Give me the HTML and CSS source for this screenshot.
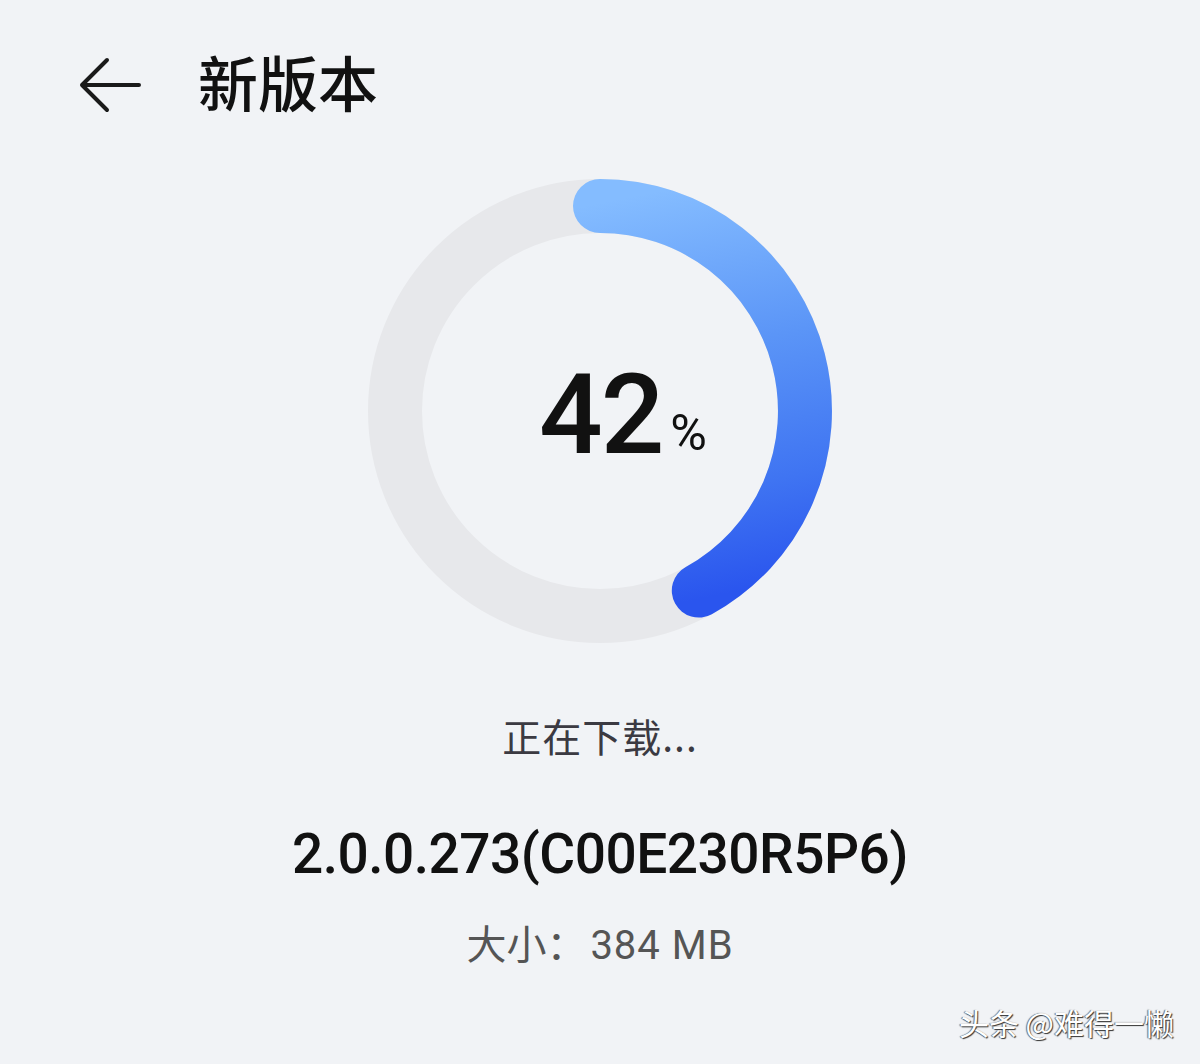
FILE: index.html
```html
<!DOCTYPE html>
<html lang="zh-CN">
<head>
<meta charset="utf-8">
<title>新版本</title>
<link rel="stylesheet" href="styles.css">
</head>
<body>
<div class="page">
  <header class="header">
    <svg class="back" width="62" height="56" viewBox="0 0 62 56">
      <path d="M28 3 L3 28 L28 53 M3 28 H60" fill="none" stroke="#1a1a1a" stroke-width="4" stroke-linecap="round" stroke-linejoin="round"/>
    </svg>
    <h1 class="title">新版本</h1>
  </header>

  <div class="ring">
    <svg class="ring-svg" width="480" height="480" viewBox="0 0 480 480">
      <defs>
        <linearGradient id="arcGrad" gradientUnits="userSpaceOnUse" x1="250" y1="30" x2="330" y2="430">
          <stop offset="0" stop-color="#84bcff"/>
          <stop offset="0.4" stop-color="#5b95f7"/>
          <stop offset="0.75" stop-color="#3f74f2"/>
          <stop offset="1" stop-color="#2a55ee"/>
        </linearGradient>
      </defs>
      <circle cx="240" cy="240" r="205" fill="none" stroke="#e7e8eb" stroke-width="54"/>
      <path d="M240 35 A205 205 0 0 1 338.8 419.6" fill="none" stroke="url(#arcGrad)" stroke-width="54" stroke-linecap="round"/>
    </svg>
    <div class="percent"><span class="num">42</span><span class="pct">%</span></div>
  </div>

  <p class="status">正在下载...</p>
  <p class="version">2.0.0.273(C00E230R5P6)</p>
  <p class="size">大小：<span class="size-val">384 MB</span></p>

  <div class="watermark">头条 @难得一懒</div>
</div>
</body>
</html>
```

FILE: styles.css
```css
html, body {
  margin: 0;
  padding: 0;
}
body {
  background: #f1f3f6;
  font-family: Roboto, "Noto Sans CJK SC", sans-serif;
  color: #111;
}
.page {
  width: 1200px;
  height: 1064px;
  display: flex;
  flex-direction: column;
  align-items: center;
  position: relative;
  overflow: hidden;
}
.header {
  align-self: stretch;
  height: 171px;
  display: flex;
  align-items: flex-start;
  padding: 55px 0 0 79px;
  box-sizing: border-box;
}
.back {
  display: block;
  margin-top: 2px;
}
.title {
  margin: -16px 0 0 57px;
  font-family: "Noto Sans CJK SC", sans-serif;
  font-weight: 500;
  font-size: 60px;
  line-height: 84px;
  color: #111;
}
.ring {
  display: grid;
  width: 480px;
  height: 480px;
}
.ring-svg {
  grid-area: 1 / 1;
  display: block;
}
.percent {
  grid-area: 1 / 1;
  align-self: center;
  justify-self: center;
  display: flex;
  align-items: baseline;
  margin-top: 8px;
}
.num {
  font-size: 112px;
  font-weight: 500;
  line-height: 1;
  letter-spacing: -2px;
  color: #111;
}
.pct {
  font-size: 50px;
  font-weight: 400;
  margin-left: 8px;
  margin-right: -46px;
  position: relative;
  top: -3px;
  color: #111;
}
.status {
  margin: 57px 0 0;
  font-family: "Noto Sans CJK SC", sans-serif;
  font-size: 39px;
  line-height: 54px;
  color: #3b3a42;
  letter-spacing: 1px;
}
.version {
  margin: 59px 0 0;
  font-size: 55px;
  font-weight: 500;
  line-height: 66px;
  letter-spacing: -0.5px;
  color: #111;
}
.size {
  margin: 30px 0 0;
  font-family: "Noto Sans CJK SC", sans-serif;
  font-size: 40px;
  line-height: 50px;
  color: #555;
}
.size-val {
  font-family: Roboto, sans-serif;
  margin-left: 4px;
  letter-spacing: 1px;
}
.watermark {
  position: absolute;
  right: 26px;
  bottom: 22px;
  font-family: "Noto Sans CJK SC", sans-serif;
  font-size: 30px;
  line-height: 40px;
  color: #fff;
  text-shadow: 1px 1px 1px #333, -1px 0 1px #666;
}
```
